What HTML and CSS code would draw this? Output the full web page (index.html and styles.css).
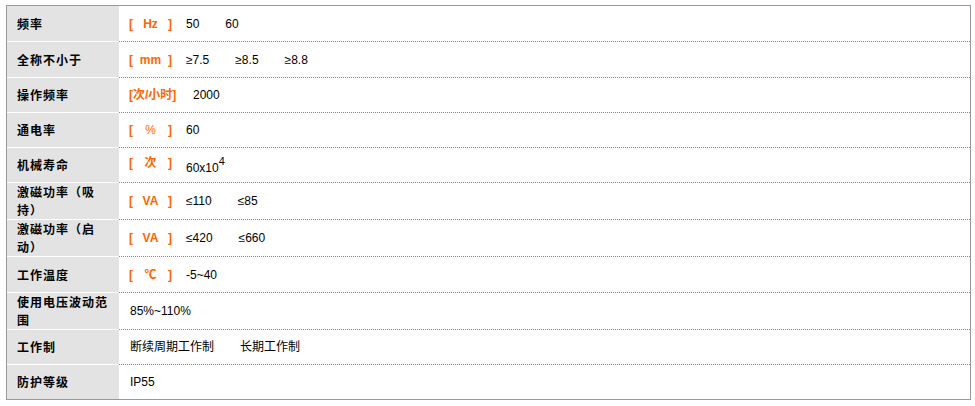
FILE: index.html
```html
<!DOCTYPE html>
<html>
<head>
<meta charset="utf-8">
<link rel="stylesheet" href="styles.css">
</head>
<body>
<div class="wrap">
<table class="spec">
  <tr class="h36"><th>频率</th><td><span class="unit"><b>[</b><b>Hz</b><b>]</b></span><span class="v">50</span><span class="v">60</span></td></tr>
  <tr class="h36"><th>全称不小于</th><td><span class="unit"><b>[</b><b>mm</b><b>]</b></span><span class="v">≥7.5</span><span class="v">≥8.5</span><span class="v">≥8.8</span></td></tr>
  <tr class="h35"><th>操作频率</th><td><span class="unit wide"><b>[次/小时]</b></span><span class="v">2000</span></td></tr>
  <tr class="h35"><th>通电率</th><td><span class="unit"><b>[</b><b class="thin">%</b><b>]</b></span><span class="v">60</span></td></tr>
  <tr class="h35"><th>机械寿命</th><td><span class="unit"><b>[</b><b>次</b><b>]</b></span><span class="v low">60x10<sup>4</sup></span></td></tr>
  <tr class="h37"><th>激磁功率（吸持）</th><td><span class="unit"><b>[</b><b>VA</b><b>]</b></span><span class="v">≤110</span><span class="v">≤85</span></td></tr>
  <tr class="h37"><th>激磁功率（启动）</th><td><span class="unit"><b>[</b><b>VA</b><b>]</b></span><span class="v">≤420</span><span class="v">≤660</span></td></tr>
  <tr class="h36"><th>工作温度</th><td><span class="unit"><b>[</b><b>℃</b><b>]</b></span><span class="v">-5~40</span></td></tr>
  <tr class="h36"><th>使用电压波动范围</th><td class="plain"><span class="v">85%~110%</span></td></tr>
  <tr class="h35"><th>工作制</th><td class="plain"><span class="v">断续周期工作制</span><span class="v">长期工作制</span></td></tr>
  <tr class="h34 last"><th>防护等级</th><td class="plain"><span class="v">IP55</span></td></tr>
</table>
</div>
</body>
</html>
```
FILE: styles.css
```css
html, body {
  margin: 0;
  padding: 0;
  background: #fff;
}
.wrap {
  padding: 5px 0 0 6px;
}
.spec {
  width: 965px;
  table-layout: fixed;
  border-collapse: separate;
  border-spacing: 0;
  border: 1px solid #999;
  font-family: "Liberation Sans", "Noto Sans CJK SC", sans-serif;
  font-size: 12px;
  color: #000;
}
.spec th {
  width: 94px;
  padding: 0 8px 0 10px;
  background: #e3e3e3;
  border-bottom: 1px solid #fff;
  text-align: left;
  vertical-align: middle;
  font-family: "Noto Sans CJK SC", sans-serif;
  font-weight: bold;
  letter-spacing: 1px;
  line-height: 18px;
}
.spec td {
  padding: 0 0 0 10px;
  border-bottom: 1px dotted #888;
  vertical-align: middle;
  line-height: 18px;
  white-space: nowrap;
}
.spec td.plain {
  padding-left: 11px;
}
.spec tr.last th,
.spec tr.last td {
  border-bottom: none;
}
.h34 { height: 34px; }
.h35 { height: 35px; }
.h36 { height: 36px; }
.h37 { height: 37px; }
.unit {
  display: inline-flex;
  justify-content: space-between;
  width: 43px;
  margin-right: 14px;
  color: #f60;
  vertical-align: top;
}
.unit b {
  font-weight: bold;
  font-family: "Liberation Sans", "Noto Sans CJK SC", sans-serif;
}
.unit b.thin {
  font-weight: normal;
}
.unit.wide {
  width: 49px;
  margin-right: 15px;
}
.v {
  margin-right: 26px;
}
.v.low {
  vertical-align: -5px;
}
.v sup {
  font-size: 11px;
  line-height: 0;
  vertical-align: 7px;
}
```
